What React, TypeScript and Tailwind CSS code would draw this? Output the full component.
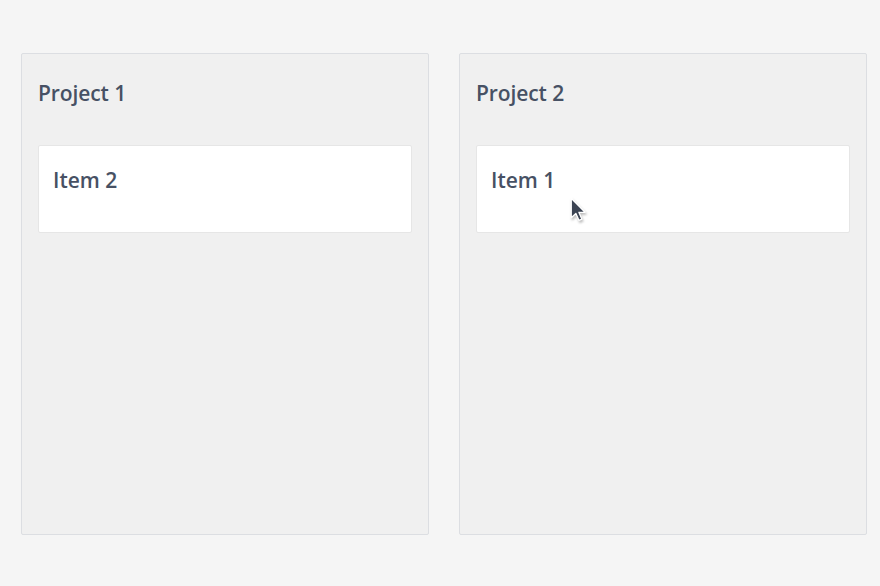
import React from 'react';

type Column = { title: string; items: string[] };

const columns: Column[] = [
    { title: 'Project 1', items: ['Item 2'] },
    { title: 'Project 2', items: ['Item 1'] },
];

const Cursor: React.FC = () => (
    <svg
        className="absolute left-[569px] top-[196px] pointer-events-none drop-shadow-[1px_2px_1px_rgba(0,0,0,0.25)]"
        width="20"
        height="30"
        viewBox="0 0 18 26"
    >
        <path
            d="M2 1.5 L2 19 L6.2 15.2 L9 21.5 L11.6 20.4 L8.9 14.2 L14.5 14.2 Z"
            fill="#3b4352"
            stroke="#ffffff"
            strokeWidth="1.2"
            strokeLinejoin="round"
        />
    </svg>
);

const App: React.FC = () => {
    return (
        <div className="relative w-full h-[586px] bg-[#f5f5f5] font-['Open_Sans',sans-serif] text-[#475164] overflow-hidden">
            <div className="flex gap-[30px] pl-[21px] pt-[53px]">
                {columns.map((col) => (
                    <div key={col.title} className="w-[408px] h-[482px] flex flex-col bg-[#f0f0f0] border border-[#dcdee2] rounded-[2px]">
                        {/* header */}
                        <div className="h-[75px] flex items-center px-4 pt-[4px]">
                            <h2 className="text-[21px] font-semibold tracking-[-0.1px]">{col.title}</h2>
                        </div>
                        {/* cards */}
                        <div className="flex-1 px-4 pt-4">
                            {col.items.map((item) => (
                                <div key={item} className="h-[88px] bg-white border border-[#e6e6e6] rounded-[2px] px-[14px] pt-[20px]">
                                    <span className="text-[21px] font-semibold leading-7">{item}</span>
                                </div>
                            ))}
                        </div>
                    </div>
                ))}
            </div>
            <Cursor />
        </div>
    );
};

export default App;
